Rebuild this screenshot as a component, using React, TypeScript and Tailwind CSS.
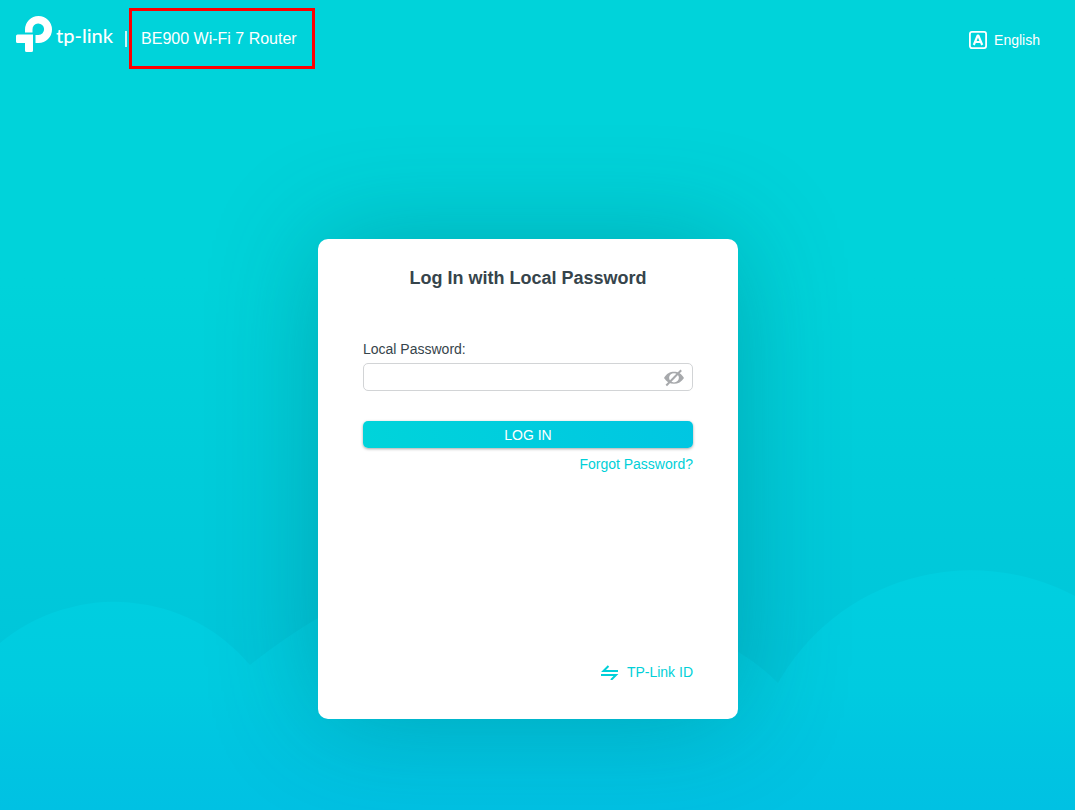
import { useState } from "react";

function LogoMark() {
  return (
    <svg viewBox="0 0 36 36" className="size-9 shrink-0" fill="#fff" aria-hidden="true">
      <path d="M9 16.500V13.500A13.500 13.500 0 1 1 22.500 27H19.500V19H22.500A5.800 5.800 0 1 0 16.500 13.500V16.500Z" />
      <path d="M1.500 18.500H17V34.500Q17 36 15.500 36H10.500Q9 36 9 34.500V27H1.500Q0 27 0 25.500V20Q0 18.500 1.500 18.500Z" />
    </svg>
  );
}

function LanguageIcon() {
  return (
    <svg viewBox="0 0 20 20" className="size-5 shrink-0" fill="none" stroke="#fff" aria-hidden="true">
      <rect x="1.900" y="1.900" width="16.200" height="16.200" rx="2" strokeWidth="1.800" />
      <path d="M5.800 15L9.600 5.600H10.400L14.200 15M7.200 12H12.800" strokeWidth="2.200" strokeLinejoin="round" />
    </svg>
  );
}

function EyeOffIcon() {
  return (
    <svg viewBox="0 0 20 16" className="h-4 w-5 overflow-visible" fill="none" stroke="#a7a9ac" aria-hidden="true">
      <path
        fill="#a7a9ac"
        stroke="none"
        fillRule="evenodd"
        d="M0 9C2.500 4.500 6 2.700 10 2.700S17.500 4.500 20 9C17.500 13 14 14.800 10 14.800S2.500 13 0 9ZM10 4.200A4.900 4.600 0 1 0 10 13.400A4.900 4.600 0 1 0 10 4.200Z"
      />
      <path d="M2.300 16.500L17.200 1.300" strokeWidth="2" />
    </svg>
  );
}

function SwapIcon() {
  return (
    <svg viewBox="0 0 18 16" className="h-4 w-[18px]" fill="none" stroke="#00d0d8" strokeWidth="2" aria-hidden="true">
      <path d="M17 7H2.500L7.500 2M0 11H15L10 16" />
    </svg>
  );
}

function Clouds() {
  return (
    <svg
      viewBox="0 0 1075 240"
      preserveAspectRatio="none"
      className="absolute inset-x-0 bottom-0 h-60 w-full"
      aria-hidden="true"
    >
      <defs>
        <linearGradient id="cloud" x1="0" y1="0" x2="0" y2="240" gradientUnits="userSpaceOnUse">
          <stop offset="0" stopColor="#00cfe0" />
          <stop offset=".5" stopColor="#00cbe0" />
          <stop offset=".7" stopColor="#00c6e1" />
          <stop offset="1" stopColor="#00c1e3" />
        </linearGradient>
      </defs>
      <path
        fill="url(#cloud)"
        d="M0 73A178 178 0 0 1 250 95Q284 68 318 48Q528 -55 740 83Q760 95 778 113A222 222 0 0 1 1075 26V240H0Z"
      />
    </svg>
  );
}

export default function App() {
  const [visible, setVisible] = useState(false);
  return (
    <div className="relative isolate flex min-h-screen flex-col bg-linear-to-b from-[#00d3da] from-35% to-[#00c6da] to-80% font-['Liberation_Sans',Arial,sans-serif] text-sm text-[#36444b]">
      <div className="absolute inset-0 -z-10 overflow-hidden">
        <Clouds />
      </div>

      <header className="flex items-start justify-between pt-2 pr-[35px] pl-4 text-white">
        <div className="flex items-center">
          <a
            href="#home"
            aria-label="tp-link"
            className="flex h-13 items-center gap-1 self-start font-['Lato',sans-serif] text-xl leading-7 font-medium"
          >
            <LogoMark />
            <span className="pt-0.5">tp-link</span>
          </a>
          <span className="ml-3 h-4 w-0.5 bg-white/80" />
          <div className="relative ml-3.5 flex h-[61px] items-center text-base">
            <h1>BE900 Wi-Fi 7 Router</h1>
            <span className="absolute -right-4.5 -left-3 inset-y-0 border-3 border-[#fe0000]" />
          </div>
        </div>
        <button type="button" className="mt-5 flex items-center gap-1.5 leading-6">
          <LanguageIcon />
          English
        </button>
      </header>

      <main className="flex grow justify-center pt-[170px] pr-[19px] pb-20">
        <form
          className="flex h-120 w-full max-w-105 flex-col self-start rounded-[10px] bg-white px-[45px] pt-[25px] pb-[37px] shadow-[0_0_110px_rgba(0,80,90,0.3)]"
          onSubmit={(e) => e.preventDefault()}
        >
          <h2 className="text-center text-lg leading-7 font-bold">Log In with Local Password</h2>
          <label htmlFor="password" className="mt-[47px] leading-5">
            Local Password:
          </label>
          <div className="mt-1 flex h-7 items-center rounded-[5px] border border-[#d2d4d6] pr-2 pl-2.5">
            <input id="password" type={visible ? "text" : "password"} className="min-w-0 grow outline-none" />
            <button type="button" aria-label="Show password" onClick={() => setVisible(!visible)}>
              <EyeOffIcon />
            </button>
          </div>
          <button
            type="submit"
            className="mt-7.5 h-[27px] rounded-[5px] bg-linear-[70deg] from-[#00d4da] to-[#00c6e2] text-white shadow-[0_1px_3px_rgba(0,0,0,0.35)]"
          >
            LOG IN
          </button>
          <a href="#forgot" className="mt-1.5 self-end leading-5 text-[#00d0d8]">
            Forgot Password?
          </a>
          <a href="#tplink-id" className="mt-auto flex items-center gap-2 self-end leading-5 text-[#00d0d8]">
            <SwapIcon />
            TP-Link ID
          </a>
        </form>
      </main>
    </div>
  );
}
